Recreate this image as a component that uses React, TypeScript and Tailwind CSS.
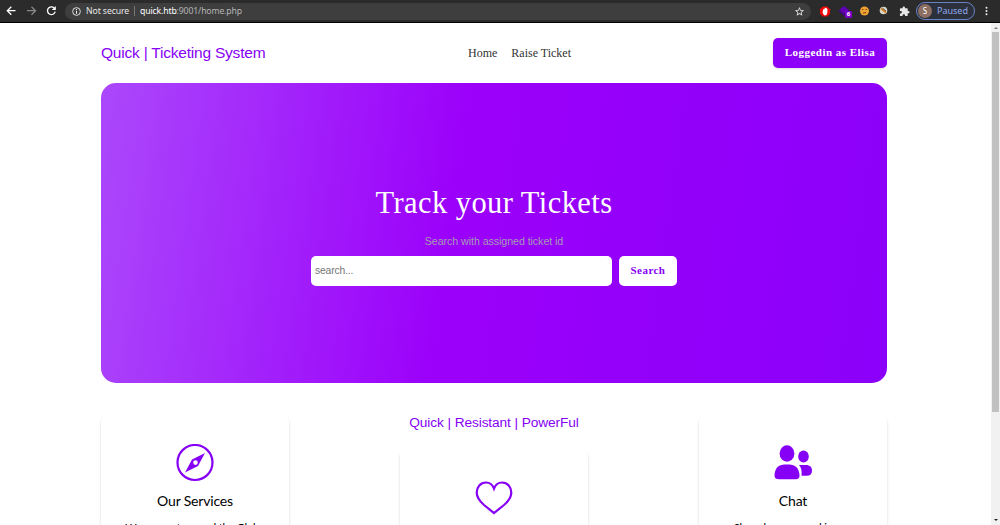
import type { ReactNode } from "react";
import { MdExtension, MdStarBorder } from "react-icons/md";

const pages = ["Home", "Raise Ticket"];

function BrowserBar() {
  return (
    <div className="flex h-[23px] shrink-0 items-center border-b border-black bg-[#2b2b2c] font-['Noto_Sans'] text-[8.7px] text-[#e8e8e8]">
      <svg viewBox="0 0 62 22" className="h-[22px] w-[62px] shrink-0" fill="none" strokeWidth="1.3">
        <path d="M15.500 10.700H7.500M11.300 6.700l-4 4 4 4" stroke="#fff" />
        <path d="M27 10.700h8M31.500 6.700l4 4-4 4" stroke="#888" />
        <path d="M54.200 8a3.900 3.900 0 1 0 1 3.700" stroke="#fff" />
        <path d="M55.800 6v4h-4z" fill="#fff" />
      </svg>
      <div className="ml-[3px] flex h-[17px] w-[746px] shrink-0 items-center rounded-full bg-[#3e3e3f]">
        <svg viewBox="0 0 10 10" className="ml-[7px] h-[9px] w-[9px]" fill="none" stroke="#eee">
          <circle cx="5" cy="5" r="4.300" />
          <path d="M5 4.500v3M5 2.300v1.200" strokeWidth="1.200" />
        </svg>
        <span className="ml-[5px] w-[43px] pt-px tracking-[-0.1px] whitespace-nowrap">Not secure</span>
        <span className="ml-[5px] h-[10px] w-px bg-[#777]" />
        <span className="ml-[5px] pt-px tracking-[-0.150px] whitespace-nowrap text-[#b5b5b5]">
          <span className="text-white">quick.htb</span>:9001/home.php
        </span>
        <MdStarBorder className="mr-[6px] ml-auto h-[11px] w-[11px]" />
      </div>
      <svg viewBox="0 0 12 12" className="ml-[8px] h-[11px] w-[12px] shrink-0">
        <path d="M3.500 .5h5l3 3v5l-3 3h-5l-3-3v-5z" fill="#f00808" />
        <path d="M3.500 5.500l1-2.500.8.700.6-2 1 .6 1 .2.800 1-.200 4L7.300 10H5L3.500 7.500z" fill="#fff" />
      </svg>
      <div className="relative ml-[8px] h-[12px] w-[12px] shrink-0">
        <svg viewBox="0 0 12 12" className="h-[12px] w-[12px]">
          <path d="M5 1l5 4-5 4-5-4z" fill="#5f00b3" />
          <path d="M0 5l5 4 5-4v2l-5 4-5-4z" fill="#3d087b" />
        </svg>
        <span className="absolute top-[6px] left-[6px] flex h-[7px] w-[7px] items-center justify-center rounded-[1px] bg-[#7b00c8] text-[6px] font-bold text-white">
          6
        </span>
      </div>
      <svg viewBox="0 0 32 12" className="ml-[8px] h-[12px] w-[32px] shrink-0">
        <circle cx="5.500" cy="6" r="4.500" fill="#eda234" />
        <path d="M3 4.500h1.500M6.500 4.500H8M4 8l3-.5" stroke="#82410b" />
        <circle cx="24.500" cy="5.500" r="3.800" fill="#d9d5c8" />
        <path d="M22 3.500l5 4" stroke="#d08020" strokeWidth="1.800" />
        <path d="M23.500 3l3.500 3" stroke="#333" strokeWidth=".8" />
      </svg>
      <MdExtension className="ml-[8px] h-[11px] w-[11px] shrink-0" />
      <div className="ml-[6px] flex h-[18px] w-[59px] shrink-0 items-center rounded-full border border-[#6883c5] bg-[#2c303b] text-[#91a9ed]">
        <span className="ml-px flex h-[14px] w-[14px] items-center justify-center rounded-full bg-[#8d6e63] text-[8px] text-white">
          S
        </span>
        <span className="ml-[5px] text-[9px]">Paused</span>
      </div>
      <svg viewBox="0 0 3 12" className="ml-[10px] h-[10px] w-[3px] shrink-0" fill="#eee">
        <circle cx="1.500" cy="2" r="1.200" />
        <circle cx="1.500" cy="6" r="1.200" />
        <circle cx="1.500" cy="10" r="1.200" />
      </svg>
    </div>
  );
}

function Card({ children }: { children: ReactNode }) {
  return (
    <article className="flex h-[220px] w-[188px] flex-col items-center rounded-[6px] pt-[28px] font-['Lato'] text-black shadow-[0_2px_3px_rgba(0,0,0,0.16)]">
      {children}
    </article>
  );
}

export default function App() {
  return (
    <div className="flex h-[525px] w-[1000px] flex-col overflow-hidden bg-white">
      <BrowserBar />
      <div className="flex min-h-0 flex-1">
        <main className="min-w-0 flex-1 pr-[104px] pl-[101px]">
          {/* Header */}
          <header className="flex h-[60px] items-center">
            <h1 className="w-[367px] font-['Liberation_Sans'] text-[15.500px] tracking-[-0.210px] text-[#8600f5]">
              Quick | Ticketing System
            </h1>
            <nav className="flex gap-[14px] font-['Liberation_Serif'] text-[12px] text-[#333]">
              {pages.map((page) => (
                <a key={page} href="#" className="whitespace-nowrap">{page}</a>
              ))}
            </nav>
            <button className="ml-auto h-[30px] w-[114px] rounded-[5px] bg-[#8c00fa] pb-[2px] font-['Liberation_Serif'] text-[11px] font-bold tracking-[0.470px] text-white shadow-sm">
              Loggedin as Elisa
            </button>
          </header>

          {/* Ticket search */}
          <section className="flex h-[300px] flex-col items-center rounded-[15px] bg-[linear-gradient(98deg,#ab48fb_0%,#9b00fa_45%,#8b00fa_100%)] pt-[101px]">
            <h2 className="font-['Liberation_Serif'] text-[30.500px] leading-[38px] tracking-[0.430px] text-white">
              Track your Tickets
            </h2>
            <p className="mt-[11px] font-['Liberation_Sans'] text-[10.700px] leading-[16px] tracking-[-0.080px] text-[#a79bb5]">
              Search with assigned ticket id
            </p>
            <form className="mt-[7px] flex gap-[7px]">
              <input
                placeholder="search..."
                className="h-[30px] w-[301px] rounded-[5px] bg-white px-[4px] pb-[2px] font-['Liberation_Sans'] text-[10.300px] tracking-[-0.150px] placeholder:text-[#757575]"
              />
              <button className="h-[30px] w-[58px] rounded-[5px] bg-white pb-[2px] font-['Liberation_Serif'] text-[11px] font-bold tracking-[0.450px] text-[#8600f5]">
                Search
              </button>
            </form>
          </section>

          {/* Services */}
          <section className="mt-[33px] flex justify-between">
            <Card>
              <svg viewBox="0 0 38 38" className="h-[38px] w-[38px] shrink-0" fill="#8600f5">
                <circle cx="19" cy="18.500" r="17.500" fill="none" stroke="#8600f5" strokeWidth="2.200" />
                <path fillRule="evenodd" d="M29 9 16 15.500 9 28.500 22 22zM19.500 16.300a2.300 2.300 0 1 1 0 4.600 2.300 2.300 0 0 1 0-4.600z" />
              </svg>
              <h3 className="mt-[9px] text-[14px] leading-[20px] tracking-[-0.180px]">Our Services</h3>
              <p className="mt-[10px] text-[11px] leading-[14px] tracking-[-0.160px] whitespace-nowrap">
                We support around the Globe
              </p>
            </Card>
            <div className="w-[188px]">
              <h3 className="-mt-px mb-[19px] text-center font-['Liberation_Sans'] text-[13.700px] leading-[16px] tracking-[-0.100px] whitespace-nowrap text-[#8600f5]">
                Quick | Resistant | PowerFul
              </h3>
              <Card>
                <svg viewBox="0 0 38 38" className="h-[38px] w-[38px] shrink-0" fill="none" stroke="#8600f5" strokeWidth="2.200">
                  <path d="M19 10.500C17.500 6.500 14.500 4.500 11 4.500 5.500 4.500 1.700 9 1.700 14.500c0 5.500 3.300 9 7.300 12.500l10 8 10-8c4-3.500 7.300-7 7.300-12.500 0-5.500-3.800-10-9.300-10-3.500 0-6.500 2-8 6z" />
                </svg>
              </Card>
            </div>
            <Card>
              <svg viewBox="0 0 38 38" className="h-[38px] w-[38px] shrink-0" fill="#8600f5">
                <ellipse cx="13" cy="9.500" rx="7.400" ry="8.200" />
                <path d="M13 20.500c4 0 7 .5 9.300 2.500 2.200 2 3.200 6 3.200 8.500s-1 3.800-4 3.800H5c-3 0-4.500-1-4.500-3.800s1-6.500 3-8.500S9 20.500 13 20.500z" />
                <ellipse cx="29.500" cy="12.500" rx="5.300" ry="6" />
                <path d="M25 21h7c4 0 6 2.200 6 5.700 0 3.200-2 5-5 5h-5.500c.5-4.500 0-7.700-2.500-10.700z" />
              </svg>
              <h3 className="mt-[9px] text-[14px] leading-[20px] tracking-[-0.150px]">Chat</h3>
              <p className="mt-[10px] text-[11px] leading-[14px] whitespace-nowrap">Share keys around in our</p>
            </Card>
          </section>
        </main>
        {/* Scrollbar */}
        <div className="flex w-[9px] flex-col items-center bg-[#f1f1f1]">
          <svg viewBox="0 0 8 9" className="h-[9px] w-[8px] shrink-0"><path d="M2 6l2-2 2 2z" fill="#777" /></svg>
          <div className="h-[380px] w-[7px] shrink-0 bg-[#c1c1c1]" />
          <svg viewBox="0 0 8 9" className="mt-auto h-[9px] w-[8px] shrink-0"><path d="M2 3l2 2 2-2z" fill="#222" /></svg>
        </div>
      </div>
    </div>
  );
}
